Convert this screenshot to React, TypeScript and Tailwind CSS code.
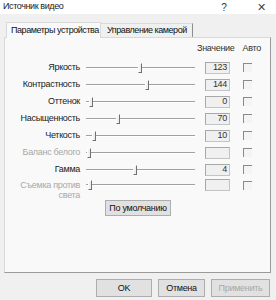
import React from "react";

type Row = { label: string; label2?: string; thumb: number; value: string; disabled?: boolean };

const rows: Row[] = [
  { label: "Яркость", thumb: 140, value: "123" },
  { label: "Контрастность", thumb: 147, value: "144" },
  { label: "Оттенок", thumb: 91, value: "0" },
  { label: "Насыщенность", thumb: 118, value: "70" },
  { label: "Четкость", thumb: 94, value: "10" },
  { label: "Баланс белого", thumb: 89, value: "", disabled: true },
  { label: "Гамма", thumb: 135, value: "4" },
  { label: "Съемка против", label2: "света", thumb: 90, value: "", disabled: true },
];

function Slider({ thumb }: { thumb: number }) {
  const left = thumb - 86 - 2;
  return (
    <div className="relative w-[109px] h-[14px]">
      <div className="absolute left-0 right-0 top-[6px] h-[2px] border-t border-[#a0a0a0] border-b border-b-white" />
      <div
        className="absolute top-[2px] w-[4px] h-[10px] bg-[#f0f0f0] border-l border-t border-l-white border-t-white border-r border-b border-r-[#707070] border-b-[#707070]"
        style={{ left }}
      />
    </div>
  );
}

function ValueBox({ value }: { value: string }) {
  return (
    <div className="w-[25px] h-[12px] border border-[#c4c4c4] border-t-[#a8a8a8] border-l-[#a8a8a8] bg-[#f0f0f0] flex items-center justify-end pr-[2px] text-[9px] leading-none text-[#333]">
      {value}
    </div>
  );
}

function Check() {
  return <div className="w-[9px] h-[9px] border-t border-l border-[#8a8a8a] bg-[#f4f4f4]" />;
}

function Btn({ children, className = "", disabled = false }: { children: React.ReactNode; className?: string; disabled?: boolean }) {
  return (
    <div
      className={`flex items-center justify-center border border-[#adadad] bg-[#e1e1e1] text-[9px] leading-none whitespace-nowrap ${disabled ? "text-[#a8a8a8]" : "text-[#111]"} ${className}`}
    >
      {children}
    </div>
  );
}

export default function App() {
  return (
    <div
      className="w-[276px] h-[300px] bg-[#f0f0f0] flex flex-col overflow-hidden whitespace-nowrap tracking-[-0.3px]"
      style={{ fontFamily: '"Liberation Sans", Arial, sans-serif' }}
    >
      {/* title bar */}
      <div className="h-[14px] bg-white flex items-center text-[9px] text-[#222] shrink-0">
        <div className="pl-[3px] tracking-[-0.4px]">Источник видео</div>
        <div className="flex-1" />
        <div className="w-[10px] text-center text-[10px] text-[#333]">?</div>
        <div className="w-[26px]" />
        <div className="w-[12px] text-center text-[11px] font-light text-[#444]">✕</div>
        <div className="w-[9px]" />
      </div>

      {/* tabs */}
      <div className="mt-[7px] ml-[6px] flex items-end h-[16px] text-[9px] text-[#111] shrink-0 tracking-[-0.45px]">
        <div className="h-[16px] w-[95px] bg-[#f9f9f9] border-t border-l border-r border-[#d9d9d9] flex items-center pl-[4px] relative z-10 mb-[-1px]">
          Параметры устройства
        </div>
        <div className="h-[14px] w-[92px] border-t border-r border-[#d9d9d9] border-r-[#8f8f8f] flex items-center pl-[6px] bg-[#f0f0f0]">
          Управление камерой
        </div>
      </div>

      {/* panel */}
      <div className="ml-[4px] w-[267px] h-[236px] border border-[#d9d9d9] border-r-[#9a9a9a] border-b-[#9a9a9a] bg-[#f9f9f9] shrink-0 text-[9px]">
        <div className="pt-[4px] flex h-[18px] items-center">
          <div className="ml-[192px] text-[#333]">Значение</div>
          <div className="ml-[8px] text-[#333]">Авто</div>
        </div>
        <div className="mt-[3px] flex flex-col">
          {rows.map((r) =>
            r.label2 ? (
              <div key={r.label} className="flex items-start h-[22px]">
                <div className="w-[75px] text-right leading-[10px] pt-[2px] text-[#a8a8a8]">
                  <div>{r.label}</div>
                  <div>{r.label2}</div>
                </div>
                <div className="ml-[6px] h-[14px] flex items-center">
                  <Slider thumb={r.thumb} />
                </div>
                <div className="ml-[10px] h-[14px] flex items-center">
                  <ValueBox value={r.value} />
                </div>
                <div className="ml-[13px] h-[14px] flex items-center">
                  <Check />
                </div>
              </div>
            ) : (
              <div key={r.label} className="flex items-center h-[17px]">
                <div className={`w-[75px] text-right leading-none ${r.disabled ? "text-[#a8a8a8]" : "text-[#1a1a1a]"}`}>
                  {r.label}
                </div>
                <div className="ml-[6px]">
                  <Slider thumb={r.thumb} />
                </div>
                <div className="ml-[10px]">
                  <ValueBox value={r.value} />
                </div>
                <div className="ml-[13px]">
                  <Check />
                </div>
              </div>
            )
          )}
        </div>
        <div className="flex">
          <Btn className="ml-[100px] w-[66px] h-[16px]">По умолчанию</Btn>
        </div>
      </div>

      {/* bottom buttons */}
      <div className="mt-[6px] flex">
        <Btn className="ml-[96px] w-[56px] h-[18px]">OK</Btn>
        <Btn className="ml-[6px] w-[47px] h-[18px]">Отмена</Btn>
        <Btn className="ml-[6px] w-[59px] h-[18px]" disabled>
          Применить
        </Btn>
      </div>
    </div>
  );
}
